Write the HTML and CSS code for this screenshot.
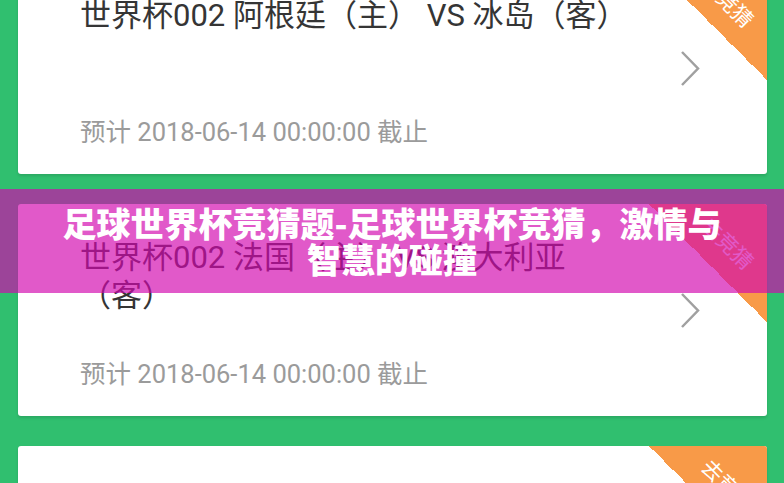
FILE: index.html
```html
<!DOCTYPE html>
<html lang="zh-CN">
  <head>
    <meta charset="UTF-8" />
    <meta name="viewport" content="width=device-width, initial-scale=1.0" />
    <title>足球世界杯竞猜</title>
    <link rel="stylesheet" href="styles.css">
  </head>
  <body>
    <div class="list">
      <div class="card">
        <div class="info">
          <div class="match">世界杯002 阿根廷（主） VS 冰岛（客）</div>
          <div class="deadline">预计 2018-06-14 00:00:00 截止</div>
        </div>
        <svg class="arrow" width="20" height="37" viewBox="0 0 20 37">
          <polyline points="2,2 18,18.5 2,35" fill="none" stroke="#a0a0a0" stroke-width="2.5" />
        </svg>
        <div class="ribbon"><span>去竞猜</span></div>
      </div>

      <div class="card">
        <div class="info">
          <div class="match">世界杯002 法国（主） VS 澳大利亚（客）</div>
          <div class="deadline">预计 2018-06-14 00:00:00 截止</div>
        </div>
        <svg class="arrow" width="20" height="37" viewBox="0 0 20 37">
          <polyline points="2,2 18,18.5 2,35" fill="none" stroke="#a0a0a0" stroke-width="2.5" />
        </svg>
        <div class="ribbon"><span>去竞猜</span></div>
      </div>

      <div class="card">
        <div class="info">
          <div class="match">世界杯003 葡萄牙（主） VS 西班牙（客）</div>
          <div class="deadline">预计 2018-06-15 00:00:00 截止</div>
        </div>
        <svg class="arrow" width="20" height="37" viewBox="0 0 20 37">
          <polyline points="2,2 18,18.5 2,35" fill="none" stroke="#a0a0a0" stroke-width="2.5" />
        </svg>
        <div class="ribbon"><span>去竞猜</span></div>
      </div>
    </div>

    <div class="banner">
      <h1>足球世界杯竞猜题-足球世界杯竞猜，激情与<br />智慧的碰撞</h1>
    </div>
  </body>
</html>
```

FILE: styles.css
```css
body {
  margin: 0;
  padding: 0;
  height: 483px;
  overflow: hidden;
  background-color: #30bf6f;
  font-family: Roboto, "Noto Sans CJK SC", sans-serif;
}
.list {
  display: flex;
  flex-direction: column;
  gap: 30px;
  margin-top: -38px;
  padding: 0 17px 0 18px;
}
.card {
  position: relative;
  display: flex;
  align-items: center;
  justify-content: space-between;
  height: 212px;
  box-sizing: border-box;
  padding: 0 67px 0 62px;
  background-color: #fff;
  border-radius: 3px;
  box-shadow: 0 2px 3px rgba(0, 0, 0, 0.12);
  overflow: hidden;
}
.info {
  width: 545px;
  align-self: stretch;
  padding-top: 35px;
}
.match {
  min-height: 76px;
  font-size: 31px;
  line-height: 38px;
  color: #353535;
}
.deadline {
  margin-top: 43px;
  font-size: 25.5px;
  line-height: 32px;
  color: #9b9b9b;
}
.arrow {
  flex: none;
}
.ribbon {
  position: absolute;
  top: 0;
  right: 0;
  width: 118px;
  height: 118px;
  background: linear-gradient(to bottom left, #f89a48 50%, transparent 50%);
}
.ribbon span {
  position: absolute;
  left: 78px;
  top: 40px;
  transform: translate(-50%, -50%) rotate(45deg);
  white-space: nowrap;
  font-size: 21px;
  line-height: 24px;
  color: #fff;
}
.banner {
  position: absolute;
  top: 189px;
  left: 0;
  width: 100%;
  height: 104px;
  display: flex;
  align-items: center;
  justify-content: center;
  background-color: rgba(210, 8, 175, 0.67);
}
.banner h1 {
  margin: 0;
  text-align: center;
  font-family: "Noto Sans CJK SC", sans-serif;
  font-size: 34px;
  font-weight: 900;
  line-height: 36px;
  color: #fff;
}
```
